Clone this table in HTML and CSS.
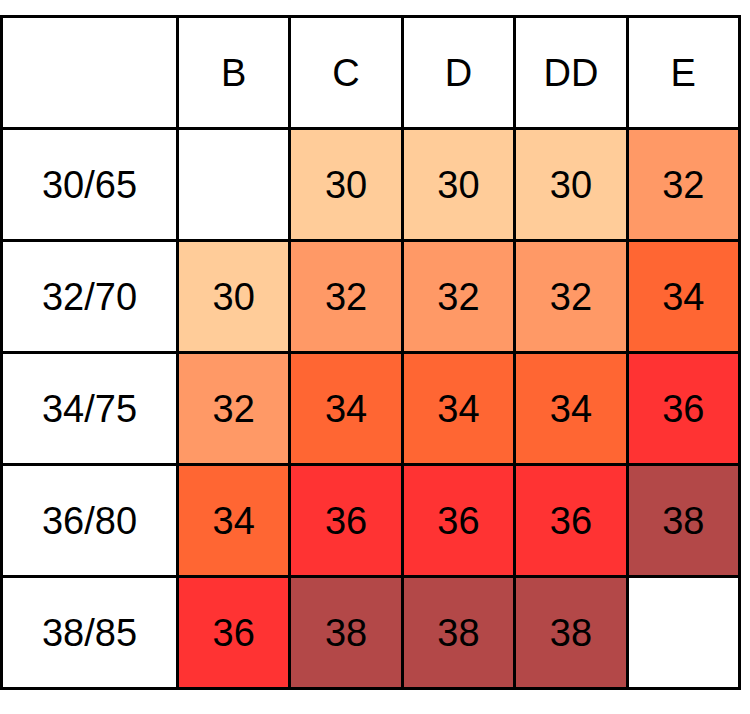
FILE: index.html
```html
<!DOCTYPE html>
<html>
<head>
<meta charset="utf-8">
<link rel="stylesheet" href="styles.css">
</head>
<body>
<div class="chart">
  <div class="cell"></div>
  <div class="cell">B</div>
  <div class="cell">C</div>
  <div class="cell">D</div>
  <div class="cell">DD</div>
  <div class="cell">E</div>

  <div class="cell">30/65</div>
  <div class="cell"></div>
  <div class="cell c30">30</div>
  <div class="cell c30">30</div>
  <div class="cell c30">30</div>
  <div class="cell c32">32</div>

  <div class="cell">32/70</div>
  <div class="cell c30">30</div>
  <div class="cell c32">32</div>
  <div class="cell c32">32</div>
  <div class="cell c32">32</div>
  <div class="cell c34">34</div>

  <div class="cell">34/75</div>
  <div class="cell c32">32</div>
  <div class="cell c34">34</div>
  <div class="cell c34">34</div>
  <div class="cell c34">34</div>
  <div class="cell c36">36</div>

  <div class="cell">36/80</div>
  <div class="cell c34">34</div>
  <div class="cell c36">36</div>
  <div class="cell c36">36</div>
  <div class="cell c36">36</div>
  <div class="cell c38">38</div>

  <div class="cell">38/85</div>
  <div class="cell c36">36</div>
  <div class="cell c38">38</div>
  <div class="cell c38">38</div>
  <div class="cell c38">38</div>
  <div class="cell"></div>
</div>
</body>
</html>
```
FILE: styles.css
```css
html, body {
  margin: 0;
  padding: 0;
  background: #ffffff;
}

.chart {
  margin-top: 15px;
  width: 741px;
  box-sizing: border-box;
  display: grid;
  grid-template-columns: 173px repeat(5, 1fr);
  grid-auto-rows: 109px;
  gap: 3px;
  padding: 3px;
  background: #000000;
}

.cell {
  background: #ffffff;
  display: flex;
  align-items: center;
  justify-content: center;
  padding-top: 2px;
  font-family: "Liberation Sans", Arial, sans-serif;
  font-size: 38px;
  color: #000000;
}

.c30 { background: #ffcc99; }
.c32 { background: #ff9966; }
.c34 { background: #ff6633; }
.c36 { background: #ff3333; }
.c38 { background: #b34848; }
```
